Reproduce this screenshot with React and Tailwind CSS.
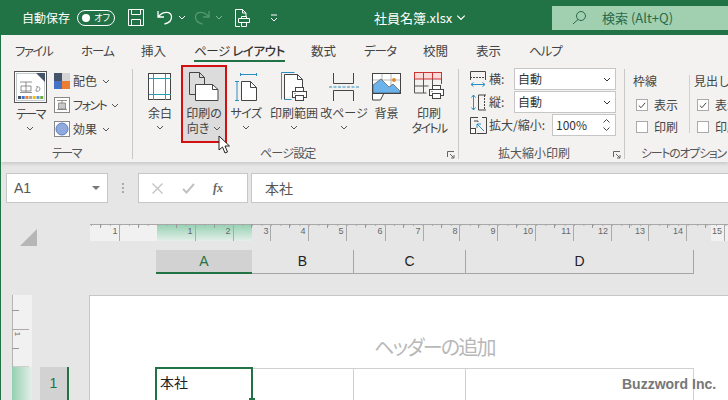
import React from "react";

const FONT = { fontFamily: '"Noto Sans CJK JP","Liberation Sans",sans-serif' };

const Chev = ({ c = "#555", className = "" }) => (
  <svg width="8" height="5" viewBox="0 0 8 5" className={className}><path d="M1 1l3 3 3-3" fill="none" stroke={c} strokeWidth="1" /></svg>
);

const IconTheme = () => (
  <svg width="33" height="33" viewBox="0 0 33 33">
    <rect x=".5" y=".5" width="32" height="31" fill="#fff" stroke="#555" />
    <rect x="2.5" y="2.5" width="28" height="27" fill="#fff" stroke="#9aa" strokeWidth=".6" />
    <path d="M22 2h9v9z" fill="#44546a" />
    <path d="M6 11h12M7 15h10v5H7zM6 21.5h12M12 11v10" fill="none" stroke="#777" strokeWidth=".8" />
    <path d="M22 16c2-1 4 0 4 2s-3 3-4 2 2-4 2-4" fill="none" stroke="#777" strokeWidth=".8" />
    {["#44546a", "#4472c4", "#ed7d31", "#a5a5a5", "#ffc000", "#5b9bd5", "#70ad47"].map((c, i) => (
      <rect key={i} x={4 + i * 3.7} y="25" width="3" height="3" fill={c} />
    ))}
  </svg>
);
const IconColors = () => (
  <svg width="16" height="16" viewBox="0 0 16 16">
    <rect width="8" height="8" fill="#44546a" /><rect x="8" width="8" height="8" fill="#d5d5d5" />
    <rect y="8" width="8" height="8" fill="#4472c4" /><rect x="8" y="8" width="8" height="8" fill="#ed7d31" />
  </svg>
);
const IconFont = () => (
  <svg width="16" height="16" viewBox="0 0 16 16">
    <rect x=".5" y=".5" width="15" height="15" fill="#fff" stroke="#888" />
    <path d="M3 3.5h10M4.5 6h7v6h-7zM3 12.5h10M8 3.5v9M6 6v6M10 6v6" fill="none" stroke="#777" strokeWidth=".8" />
  </svg>
);
const IconEffect = () => (
  <svg width="16" height="16" viewBox="0 0 16 16">
    <rect x=".5" y=".5" width="15" height="15" fill="#fff" stroke="#888" />
    <circle cx="8" cy="8" r="6" fill="#8faadc" stroke="#5b7fc0" />
  </svg>
);
const IconMargin = () => (
  <svg width="24" height="28" viewBox="0 0 24 28">
    <rect x=".5" y=".5" width="22" height="26" fill="#fff" stroke="#444" />
    <path d="M5.5 1v26M17.5 1v26M1 5.5h22M1 21.5h22" stroke="#2a9db0" strokeWidth="1" fill="none" />
  </svg>
);
const IconOrient = () => (
  <svg width="30" height="29" viewBox="0 0 30 29">
    <path d="M.5.5h10l5 5v17H.5z" fill="#dcdcdc" stroke="#444" />
    <path d="M10.500.5v5h5" fill="none" stroke="#444" />
    <path d="M6.500 12.500h17l5.500 5v11H6.500z" fill="#fff" stroke="#444" />
    <path d="M23.500 12.500v5H29" fill="none" stroke="#444" />
  </svg>
);
const IconSize = () => (
  <svg width="22" height="28" viewBox="0 0 22 28">
    <path d="M5.500 1.500h16M5.500 0v3M21.500 0v3M0 8.500h4M0 27.500h4M2 8.500v19" fill="none" stroke="#2a8fc0" />
    <path d="M6.500 8.500h9l6 6v13h-15z" fill="#fff" stroke="#444" />
    <path d="M15.500 8.500v6h6" fill="none" stroke="#444" />
  </svg>
);
const Printer = ({ x, y }) => (
  <g transform={`translate(${x} ${y})`}>
    <rect x="3.500" y=".5" width="8" height="5" fill="#fff" stroke="#444" />
    <rect x=".5" y="4.500" width="14" height="6" fill="#fff" stroke="#444" />
    <rect x="3.500" y="8.500" width="8" height="5" fill="#fff" stroke="#444" />
    <path d="M2.500 6.500h1" stroke="#444" />
  </g>
);
const IconArea = () => (
  <svg width="27" height="30" viewBox="0 0 27 30">
    <path d="M.5 27.500V.5h13" fill="none" stroke="#2a8fc0" />
    <path d="M3.500 27.500v-25h13l5 5v8" fill="#fff" stroke="#444" />
    <path d="M3.500 27.500h7" fill="none" stroke="#2a8fc0" />
    <path d="M16.500 2.500v5h5" fill="none" stroke="#444" />
    <Printer x="11" y="15" />
  </svg>
);
const IconBreak = () => (
  <svg width="30" height="28" viewBox="0 0 30 28">
    <path d="M4.500 0v10.500h20V0M4.500 28V17.500h20V28" fill="none" stroke="#444" />
    <path d="M0 14h30" stroke="#2a8fc0" strokeDasharray="3 1.5" />
  </svg>
);
const IconBg = () => (
  <svg width="29" height="28" viewBox="0 0 29 28">
    <rect x=".5" y=".5" width="28" height="20" fill="#fff" stroke="#444" />
    <path d="M10 1v8M19 1v12M1 7h27M1 14h9" stroke="#999" strokeWidth=".7" />
    <path d="M1 20v-8l8-6 8 8 4-3 7 7v2z" fill="#6cb2eb" stroke="#444" strokeWidth=".6" />
    <circle cx="22" cy="7" r="2" fill="#e08a2e" />
    <path d="M.5 21v6h8l3-6" fill="#fff" stroke="#444" />
  </svg>
);
const IconTitle = () => (
  <svg width="31" height="29" viewBox="0 0 31 29">
    <rect x=".5" y=".5" width="27" height="6.500" fill="#fbdada" stroke="#c33" />
    <path d="M9.500 1v6M18.500 1v6" stroke="#c33" />
    <path d="M.5 7v14h12M9.500 7v14M.5 14h14M18.500 7v6M27.500 7v5" fill="none" stroke="#555" />
    <Printer x="15" y="13" />
  </svg>
);
const IconW = () => (
  <svg width="17" height="17" viewBox="0 0 17 17">
    <path d="M.5 9V.5h15V9" fill="none" stroke="#444" />
    <path d="M0 6.500h16" stroke="#444" strokeDasharray="2 1" />
    <path d="M1 13.500h14M1 13.500l2.500-2M1 13.500l2.500 2M15 13.500l-2.500-2M15 13.500l-2.500 2" fill="none" stroke="#2a8fc0" />
  </svg>
);
const IconH = () => (
  <svg width="17" height="17" viewBox="0 0 17 17">
    <path d="M3.500 1v15M3.500 1L1.500 3.500M3.500 1l2 2.500M3.500 16l-2-2.500M3.500 16l2-2.500" fill="none" stroke="#2a8fc0" />
    <path d="M8.500 1h7.500M8.500 1v15M8.500 16h7.500" fill="none" stroke="#444" />
    <path d="M14.500 1v15" stroke="#444" strokeDasharray="2 1" />
  </svg>
);
const IconScale = () => (
  <svg width="17" height="17" viewBox="0 0 17 17">
    <path d="M.5 11V.5H8M12 .5h4.500V16.500H6.500" fill="none" stroke="#444" />
    <path d="M4 4h4v1" fill="none" stroke="#444" />
    <path d="M14 14L7 7M7 7h4M7 7v4" fill="none" stroke="#2a8fc0" />
    <rect x=".5" y="11.500" width="5" height="5" fill="#fff" stroke="#444" />
  </svg>
);
const Launcher = ({ className = "" }) => (
  <svg width="8" height="8" viewBox="0 0 8 8" className={className}>
    <path d="M.5 6V.5H7M3 3l4 4M7 4v3H4" fill="none" stroke="#666" />
  </svg>
);

const Big = ({ w, icon, l1, l2, chev = true, active, t1 = "", t2 = "" }) => (
  <div
    className={
      "flex flex-col items-center text-[12px] leading-[14px] text-[#444] [font-feature-settings:'palt'] whitespace-nowrap h-[78px] " +
      (active ? "bg-[#dcdcdc] border-2 border-[#d40f0f] pt-[3px]" : "pt-[5px]")
    }
    style={{ width: w }}
  >
    <div className="h-[33px] flex items-center justify-center shrink-0">{icon}</div>
    <div className={"mt-[3px] " + t1}>{l1}</div>
    {l2 ? (
      <div className="flex items-center gap-1 mt-[1px]">
        <span className={t2}>{l2}</span>
        {chev && <Chev />}
      </div>
    ) : chev ? (
      <div className="h-[15px] flex items-center"><Chev /></div>
    ) : null}
  </div>
);

const Small = ({ icon, label, track = "" }) => (
  <div className="flex items-center h-[24px] text-[12px] text-[#444] whitespace-nowrap [font-feature-settings:'palt']">
    <span className="w-[19px] shrink-0 flex">{icon}</span>
    <span className={track}>{label}</span>
    <Chev className="ml-[5px]" />
  </div>
);

const Check = ({ on, label }) => (
  <div className="flex items-center gap-[6px] h-[22px] text-[12px] text-[#444] whitespace-nowrap">
    <span className="w-[12px] h-[12px] bg-white border border-[#aaa] flex items-center justify-center shrink-0">
      {on && (
        <svg width="8" height="7" viewBox="0 0 8 7"><path d="M.8 3.500l2.200 2.200L7.200.8" fill="none" stroke="#444" /></svg>
      )}
    </span>
    {label}
  </div>
);

const Select = ({ value, w = "w-[102px]" }) => (
  <div className={w + " h-[22px] bg-white border border-[#c6c6c6] flex items-center justify-between pl-[3px] pr-[4px] text-[12px] text-[#333]"}>
    <span>{value}</span>
    <Chev c="#333" />
  </div>
);

const Ruler = () => {
  const labels = [[115, "1"], [190, "1"], [228, "2"], [266, "3"], [303, "4"], [341, "5"], [380, "6"], [418, "7"], [455, "8"], [493, "9"], [528, "10"], [566, "11"], [603, "12"], [640, "13"], [678, "14"], [717, "15"]];
  const big = [119, 195, 233, 270, 308, 346, 385, 423, 459, 497, 535, 573, 611, 648, 686, 724];
  const mid = [100, 138, 176, 214, 251, 289, 327, 365, 403, 441, 478, 516, 554, 592, 629, 667, 705];
  const small = [];
  for (let x = 91; x < 728; x += 9.47) small.push(x);
  return (
    <svg width="638" height="18" viewBox="90 0 638 18" className="block">
      <defs>
        <linearGradient id="g" x1="0" y1="0" x2="0" y2="1">
          <stop offset="0" stopColor="#93d0b0" />
          <stop offset="1" stopColor="#e4efe9" />
        </linearGradient>
      </defs>
      <rect x="90" y="0" width="67" height="17" fill="#f1f1f1" />
      <rect x="157" y="0" width="95" height="17" fill="url(#g)" />
      <rect x="711" y="0" width="17" height="17" fill="#f1f1f1" />
      <path d="M90 .5h638" stroke="#a8a8a8" />
      {small.map((x, i) => <rect key={i} x={x} y="1" width="1" height="1" fill="#aaa" />)}
      {mid.map((x, i) => <path key={i} d={`M${x + 0.5} 0v4`} stroke="#999" />)}
      {big.map((x, i) => <path key={i} d={`M${x + 0.5} 0v17`} stroke="#aaa" />)}
      {labels.map(([x, t], i) => (
        <text key={i} x={x} y="10" fontSize="9" textAnchor="middle" fill="#666" fontFamily="Liberation Sans">{t}</text>
      ))}
    </svg>
  );
};

const VRuler = () => (
  <svg width="20" height="72" viewBox="0 0 20 72" className="block">
    <rect width="20" height="72" fill="#f1f1f1" />
    <path d="M.5 0v72" stroke="#b5b5b5" />
    <path d="M0 15.500h7M0 53.500h7" stroke="#999" />
    <path d="M0 34.500h17M0 72h17" stroke="#aaa" />
    <text x="0" y="0" fontSize="8" fill="#666" fontFamily="Liberation Sans" transform="translate(3 39) rotate(90)" textAnchor="middle">1</text>
  </svg>
);

const ColH = ({ w, label, active }) => (
  <div
    className={
      "h-[24px] flex items-center justify-center text-[14px] " +
      (active
        ? "bg-[#d2d2d2] border-b-2 border-[#217346] text-[#217346]"
        : "border-b border-r border-[#a5a5a5] text-[#222]")
    }
    style={{ width: w, fontFamily: '"Liberation Sans",sans-serif' }}
  >
    {label}
  </div>
);

export default function App() {
  return (
    <div className="w-[728px] h-[400px] overflow-hidden relative flex flex-col border-l border-[#217346] bg-[#e6e6e6]" style={FONT}>
      {/* Title bar */}
      <div className="h-[35px] -ml-px bg-[#217346] text-white flex items-center shrink-0 text-[12px] [font-feature-settings:'palt']">
        <span className="ml-[22px] w-[49px] whitespace-nowrap">自動保存</span>
        <div className="ml-[6px] w-[38px] h-[16px] rounded-full border border-white flex items-center justify-between px-[4px]">
          <span className="w-[8px] h-[8px] rounded-full bg-white" />
          <span className="text-[9px] leading-none">オフ</span>
        </div>
        <svg className="ml-[13px]" width="16" height="17" viewBox="0 0 16 17"><path d="M.5.5h15v16H.5zM3.500.5v5h9v-5M3.500 16.500v-6h9v6" fill="none" stroke="#fff" /></svg>
        <svg className="ml-[13px]" width="16" height="15" viewBox="0 0 16 15"><path d="M1 1v6h6M1.500 6.500C6 1 14 1 14.500 6.500c.3 4-3 6.500-7 7.500" fill="none" stroke="#fff" strokeWidth="1.300" /></svg>
        <Chev c="#fff" className="ml-[5px]" />
        <svg className="ml-[8px] opacity-40" width="16" height="15" viewBox="0 0 16 15"><path d="M15 1v6H9M14.500 6.500C10 1 2 1 1.500 6.500c-.3 4 3 6.500 7 7.500" fill="none" stroke="#9fd0b5" strokeWidth="1.300" /></svg>
        <Chev c="#7fb896" className="ml-[5px]" />
        <svg className="ml-[12px]" width="15" height="18" viewBox="0 0 15 18"><path d="M5 17.500H.5V.5h7l3.500 3.500v4M7.500.5V4H11" fill="none" stroke="#fff" /><path d="M6.500 9.500v-2h5v2M3.500 9.500h11v4h-11zM6.500 13v4.500h5V13" fill="none" stroke="#fff" /></svg>
        <svg className="ml-[20px]" width="8" height="8" viewBox="0 0 8 8"><path d="M1 1h6M1 4l3 3 3-3" fill="none" stroke="#fff" /></svg>
        <span className="ml-[96px] text-[13px] whitespace-nowrap" style={{ fontFeatureSettings: "normal" }}>社員名簿.xlsx</span>
        <Chev c="#fff" className="ml-[5px] scale-125" />
        <div className="ml-auto w-[176px] h-[24px] bg-[#a0d0b0] flex items-center text-[#2b6a48] text-[13px]">
          <svg className="ml-[20px]" width="15" height="15" viewBox="0 0 15 15"><circle cx="9" cy="6" r="4.500" fill="none" stroke="#2b6a48" /><path d="M6 9.500L1 14" stroke="#2b6a48" /></svg>
          <span className="ml-[15px] whitespace-nowrap">検索 (Alt+Q)</span>
        </div>
      </div>

      {/* Tabs */}
      <div className="h-[27px] bg-[#f3f2f1] flex items-start pt-[7px] text-[12.500px] text-[#444] shrink-0 [font-feature-settings:'palt'] whitespace-nowrap">
        <span className="ml-[14px] w-[66px] tracking-[-1.500px]">ファイル</span>
        <span className="w-[60px] tracking-[-1px]">ホーム</span>
        <span className="w-[53px]">挿入</span>
        <div className="w-[117px]">
          <div className="w-[91px] border-b-2 border-[#217346] h-[20px] text-[#333] tracking-[-0.400px]">ページ <b className="font-medium">レイアウト</b></div>
        </div>
        <span className="w-[53px]">数式</span>
        <span className="w-[59px] tracking-[-1px]">データ</span>
        <span className="w-[53px]">校閲</span>
        <span className="w-[53px]">表示</span>
        <span className="tracking-[-1px]">ヘルプ</span>
      </div>

      {/* Ribbon */}
      <div className="h-[100px] bg-[#f3f2f1] flex shrink-0 shadow-[0_2px_3px_rgba(0,0,0,0.12)] relative">
        {/* Theme group */}
        <div className="w-[131px] shrink-0 flex flex-col">
          <div className="flex h-[84px]">
            <div className="w-[53px] pl-[13px] pt-[9px] flex flex-col text-[12px] leading-[14px] text-[#444] [font-feature-settings:'palt']">
              <IconTheme />
              <div className="mt-[3px] pl-[2px] whitespace-nowrap tracking-[-1.500px]">テーマ</div>
              <div className="h-[15px] flex items-center pl-[12px]"><Chev /></div>
            </div>
            <div className="pt-[7px] flex flex-col">
              <Small icon={<IconColors />} label="配色" />
              <Small icon={<IconFont />} label="フォント" track="tracking-[-1.500px]" />
              <Small icon={<IconEffect />} label="効果" />
            </div>
          </div>
          <div className="text-[12px] text-[#555] text-center [font-feature-settings:'palt'] tracking-[-1.500px]">テーマ</div>
        </div>
        <div className="w-px h-[90px] mt-[7px] bg-[#c8c8c8] shrink-0" />

        {/* Page setup */}
        <div className="w-[325px] shrink-0 flex flex-col">
          <div className="flex h-[84px] pt-[3px] pl-[6px] items-start">
            <Big w={42} icon={<IconMargin />} l1="余白" />
            <Big w={46} active icon={<IconOrient />} l1="印刷の" l2="向き" />
            <Big w={38} icon={<IconSize />} l1="サイズ" t1="tracking-[-0.500px]" />
            <Big w={58} icon={<IconArea />} l1="印刷範囲" />
            <Big w={42} icon={<IconBreak />} l1="改ページ" />
            <Big w={43} icon={<IconBg />} l1="背景" chev={false} />
            <Big w={42} icon={<IconTitle />} l1="印刷" l2="タイトル" chev={false} t2="tracking-[-1.700px]" />
          </div>
          <div className="flex items-center text-[12px] text-[#555] [font-feature-settings:'palt'] relative">
            <span className="ml-[127px] tracking-[-0.800px]">ページ設定</span>
            <Launcher className="ml-auto mr-[3px] mt-[4px]" />
          </div>
        </div>
        <div className="w-px h-[90px] mt-[7px] bg-[#c8c8c8] shrink-0" />

        {/* Scale */}
        <div className="w-[165px] shrink-0 flex flex-col">
          <div className="h-[84px] pl-[11px] pt-[6px] flex flex-col gap-[1px] text-[12px] text-[#444] whitespace-nowrap">
            <div className="flex items-center h-[22px]"><IconW /><span className="ml-[2px] w-[25px]">横:</span><Select value="自動" /></div>
            <div className="flex items-center h-[22px]"><IconH /><span className="ml-[2px] w-[25px]">縦:</span><Select value="自動" /></div>
            <div className="flex items-center h-[22px]">
              <IconScale />
              <span className="ml-[2px] w-[63px] [font-feature-settings:'palt']">拡大/縮小:</span>
              <div className="w-[64px] h-[22px] bg-white border border-[#c6c6c6] flex items-center justify-between pl-[3px] pr-[5px]" >
                <span className="text-[12px] text-[#333]">100%</span>
                <span className="flex flex-col gap-[4px]">
                  <svg width="7" height="4" viewBox="0 0 7 4" className="block"><path d="M.5 3.500l3-3 3 3" fill="none" stroke="#444" /></svg>
                  <svg width="7" height="4" viewBox="0 0 7 4" className="block"><path d="M.5.5l3 3 3-3" fill="none" stroke="#444" /></svg>
                </span>
              </div>
            </div>
          </div>
          <div className="flex items-center text-[12px] text-[#555] [font-feature-settings:'palt']">
            <span className="ml-[39px]">拡大縮小印刷</span>
            <Launcher className="ml-auto mr-[3px] mt-[4px]" />
          </div>
        </div>
        <div className="w-px h-[90px] mt-[7px] bg-[#c8c8c8] shrink-0" />

        {/* Sheet options */}
        <div className="flex-1 min-w-0 flex flex-col overflow-hidden">
          <div className="h-[84px] flex pt-[8px] pl-[8px] text-[12px] text-[#444]">
            <div className="w-[56px] shrink-0">
              <div className="h-[22px] flex items-center">枠線</div>
              <div className="pl-[3px] mt-[2px]"><Check on label="表示" /><Check label="印刷" /></div>
            </div>
            <div className="w-px h-[58px] mt-[5px] bg-[#d0d0d0] shrink-0" />
            <div className="pl-[4px] shrink-0">
              <div className="h-[22px] flex items-center">見出し</div>
              <div className="pl-[3px] mt-[2px]"><Check on label="表示" /><Check label="印刷" /></div>
            </div>
          </div>
          <div className="pl-[16px] text-[12px] text-[#555] whitespace-nowrap [font-feature-settings:'palt'] tracking-[-1.300px]">シートのオプション</div>
        </div>
      </div>

      {/* Formula bar */}
      <div className="flex h-[30px] mt-[11px] pl-[5px] shrink-0 text-[14px] text-[#555]">
        <div className="w-[102px] bg-white border border-[#c6c6c6] flex items-center justify-between pl-[7px] pr-[7px]" style={{ fontFamily: '"Liberation Sans",sans-serif' }}>
          <span className="text-[14px]">A1</span>
          <svg width="8" height="4" viewBox="0 0 8 4"><path d="M0 0h8L4 4z" fill="#777" /></svg>
        </div>
        <div className="w-[30px] flex flex-col items-center justify-center gap-[2px]">
          <span className="w-[2px] h-[2px] bg-[#aaa]" /><span className="w-[2px] h-[2px] bg-[#aaa]" /><span className="w-[2px] h-[2px] bg-[#aaa]" />
        </div>
        <div className="w-[110px] bg-white border border-[#c6c6c6] flex items-center pl-[13px]">
          <svg width="11" height="11" viewBox="0 0 11 11"><path d="M.5.5l10 10M10.500.5l-10 10" stroke="#c2c2c2" strokeWidth="1.300" /></svg>
          <svg className="ml-[19px]" width="13" height="11" viewBox="0 0 13 11"><path d="M1 6l3.500 3.500L12 1" fill="none" stroke="#c2c2c2" strokeWidth="2" /></svg>
          <span className="ml-[18px] text-[12px] italic font-bold text-[#666]" style={{ fontFamily: '"Liberation Serif",serif' }}>fx</span>
        </div>
        <div className="ml-[3px] flex-1 bg-white border border-[#c6c6c6] border-r-0 flex items-center pl-[13px]">本社</div>
      </div>

      {/* Rulers and column headers */}
      <div className="flex h-[92px] shrink-0">
        <div className="w-[89px] shrink-0 pl-[19px] pt-[26px]">
          <svg width="17" height="17" viewBox="0 0 17 17" className="block"><path d="M17 0v17H0z" fill="#b6b6b6" /></svg>
        </div>
        <div className="flex-1 min-w-0 pt-[21px]">
          <Ruler />
          <div className="flex pl-[66px] mt-[8px]">
            <ColH w={96} label="A" active />
            <ColH w={102} label="B" />
            <ColH w={112} label="C" />
            <ColH w={228} label="D" />
          </div>
        </div>
      </div>

      {/* Page */}
      <div className="flex flex-1 min-h-0">
        <div className="w-[88px] shrink-0 flex pl-[11px]">
          <div className="w-[20px] flex flex-col">
            <VRuler />
            <div className="flex-1 bg-gradient-to-r from-[#93d0b0] to-[#e4efe9]" />
          </div>
          <div className="ml-[8px] flex flex-col">
            <div className="h-[72px]" />
            <div className="w-[29px] flex-1 bg-[#d2d2d2] border-r-2 border-[#217346] flex items-center justify-center text-[14px] text-[#217346]" style={{ fontFamily: '"Liberation Sans",sans-serif' }}>1</div>
          </div>
        </div>
        <div className="flex-1 bg-white border-l border-t border-[#c6c6c6] min-w-0 flex flex-col">
          <div className="h-[71px] pl-[284px] pt-[38px] text-[20px] leading-[26px] text-[#b8b8b8] whitespace-nowrap [font-feature-settings:'palt'] tracking-[-1.800px]">ヘッダーの追加</div>
          <div className="flex flex-1 pl-[65px]">
            <div className="w-[98px] border-2 border-b-0 border-[#217346] text-[14px] text-[#222] pl-[3px] pt-[3px] relative">
              本社
            </div>
            <div className="w-[101px] border-t border-r border-[#d0d0d0] mt-[1px]" />
            <div className="w-[112px] border-t border-r border-[#d0d0d0] mt-[1px]" />
            <div className="w-[228px] border-t border-r border-[#d0d0d0] mt-[1px]" />
          </div>
        </div>
      </div>

      {/* Overlays */}
      <div className="absolute left-[248px] top-[398px] w-[6px] h-[2px] bg-[#217346]" />
      <div className="absolute left-[621px] top-[374px] text-[14px] font-bold text-[#777]" style={{ fontFamily: '"Liberation Sans",sans-serif' }}>Buzzword Inc.</div>
      <svg className="absolute left-[217px] top-[135px]" width="13" height="20" viewBox="0 0 13 20">
        <path d="M1 1v14l3.500-3 2.500 6 2.500-1-2.500-6h4.500z" fill="#fff" stroke="#222" />
      </svg>
    </div>
  );
}
